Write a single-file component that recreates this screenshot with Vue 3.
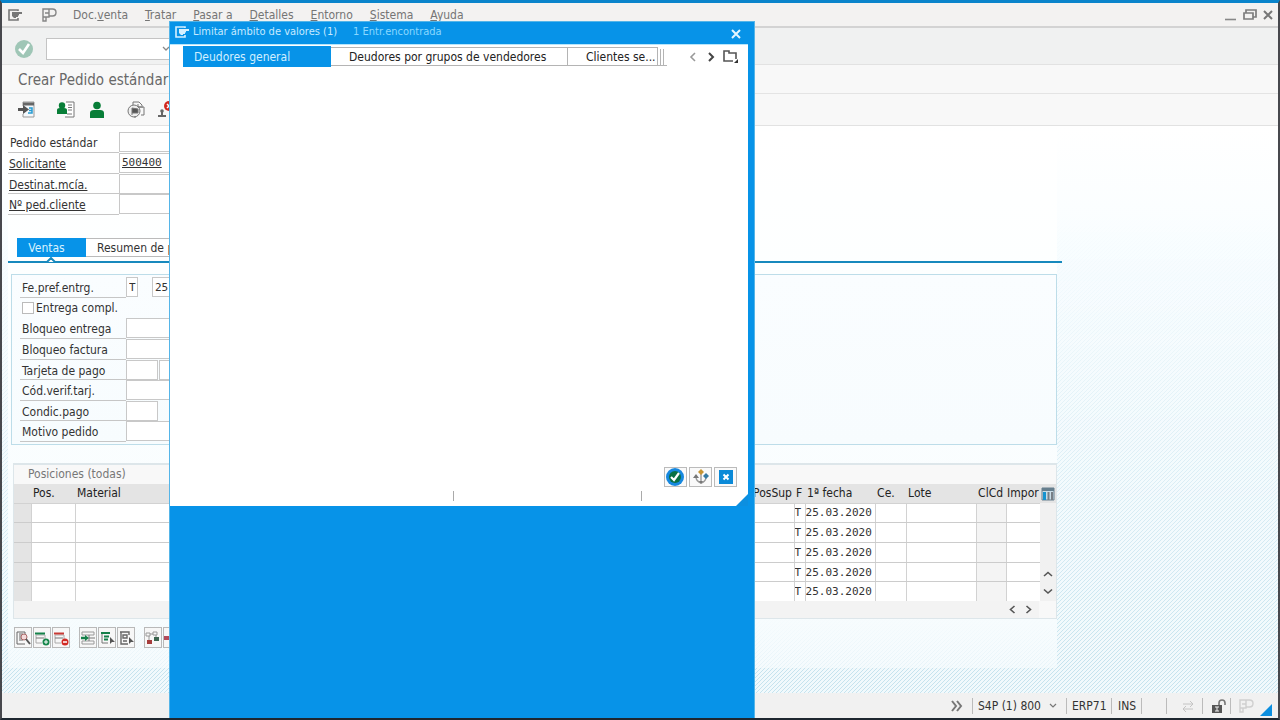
<script setup>
import { ref } from 'vue'

const menus = [
  ['Doc.', 'v', 'enta'],
  ['', 'T', 'ratar'],
  ['', 'P', 'asar a'],
  ['', 'D', 'etalles'],
  ['', 'E', 'ntorno'],
  ['', 'S', 'istema'],
  ['', 'A', 'yuda'],
]
const command = ref('')
const headFields = ref([
  { id: 'pedido', label: 'Pedido estándar', value: '', link: false },
  { id: 'solicitante', label: 'Solicitante', value: '500400', link: true },
  { id: 'destinat', label: 'Destinat.mcía.', value: '', link: true },
  { id: 'cliente', label: 'Nº ped.cliente', value: '', link: true },
])
const full = ref(false)
const typeCode = ref('T')
const prefDate = ref('25.03.2020')
const saleFields = ref([
  { id: 'bloq-ent', label: 'Bloqueo entrega', value: '', size: 'wide' },
  { id: 'bloq-fac', label: 'Bloqueo factura', value: '', size: 'wide' },
  { id: 'tarjeta', label: 'Tarjeta de pago', value: '', size: 'short', extra: true },
  { id: 'verif', label: 'Cód.verif.tarj.', value: '', size: 'wide' },
  { id: 'condic', label: 'Condic.pago', value: '', size: 'short' },
  { id: 'motivo', label: 'Motivo pedido', value: '', size: 'wide' },
])
const rows = Array.from({ length: 5 }, () => ({ type: 'T', date: '25.03.2020' }))
</script>

<template>
  <div class="window">
    <nav class="menubar">
      <button class="plain session" aria-label="Sesión">
        <svg width="14" height="12" viewBox="0 0 14 12"><path d="M10 2V1H1v10h9V9" fill="none" stroke="#777" stroke-width="1.6" /><path d="M4 3h10v2h-3v1.500h-1V8H8v1H6L4 7z" fill="#777" /></svg>
      </button>
      <button class="plain logo" aria-label="Menú">
        <svg width="15" height="14" viewBox="0 0 15 14" fill="none" stroke="#858585" stroke-width="1.4"><path d="M7 8h3.500Q14 8 14 4.500T10.500 1H1v8h6V5H3M7 5V1M1 9v4h3V9" /></svg>
      </button>
      <a v-for="m in menus" :key="m[1]" href="#" class="menu">{{ m[0] }}<u>{{ m[1] }}</u>{{ m[2] }}</a>
      <span class="winctl">
        <button class="plain" aria-label="Minimizar"><svg width="12" height="12"><path d="M0 10.500h11" stroke="#888" stroke-width="1.6" /></svg></button>
        <button class="plain" aria-label="Restaurar"><svg width="14" height="12" fill="none" stroke="#7d7d7d" stroke-width="1.7"><path d="M3 4V1h10v7h-3M1 4h9v6H1z" /></svg></button>
        <button class="plain" aria-label="Cerrar"><svg width="10" height="12"><path d="M1 2l8 8M9 2L1 10" stroke="#777" stroke-width="2" /></svg></button>
      </span>
    </nav>

    <div class="commandbar">
      <button class="plain" aria-label="Continuar">
        <svg width="18" height="20" viewBox="0 0 18 20"><circle cx="9" cy="10" r="9" fill="#9fc6b6" /><path d="M4 10l4 4 6-9" fill="none" stroke="#fff" stroke-width="2.600" /></svg>
      </button>
      <input v-model="command" class="command" aria-label="Comando" />
      <svg class="chev" width="8" height="6"><path d="M1 1l3 3 3-3" fill="none" stroke="#888" stroke-width="1.3" /></svg>
    </div>

    <h1 class="title">Crear Pedido estándar</h1>

    <div class="appbar">
      <button class="plain a1" aria-label="Otro documento"><svg width="18" height="18" viewBox="0 0 18 18"><path d="M5 5V1h11v15H5v-3" fill="#f4f8fb" stroke="#999" /><path d="M5 3h11" stroke="#666" stroke-width="3" /><path d="M0 8.500h6" stroke="#555" stroke-width="3" /><path d="M5 4l6 4.500L5 13z" fill="#555" /><path d="M11 7h3v5h-4M11 9.500h3" fill="none" stroke="#269bd2" stroke-width="1.500" /></svg></button>
      <button class="plain a2" aria-label="Detalles del deudor"><svg width="18" height="18" viewBox="0 0 18 18"><path d="M9 1h8v15H8" fill="#fff" stroke="#777" /><path d="M11 4h4M11 6.500h4M11 9h4M10 13h5" stroke="#777" /><circle cx="5" cy="4.500" r="3.200" fill="#087e38" /><path d="M0 13V9q0-2 3-2h4q3 0 3 2v4z" fill="#087e38" /></svg></button>
      <button class="plain a3" aria-label="Interlocutor"><svg width="14" height="18" viewBox="0 0 14 18"><circle cx="7" cy="4.500" r="3.800" fill="#087e38" /><path d="M0 17v-5q0-3 4-3h6q4 0 4 3v5z" fill="#087e38" /></svg></button>
      <button class="plain a4" aria-label="Resumen de salida"><svg width="18" height="18" viewBox="0 0 18 18" fill="none" stroke="#777"><path d="M6 5V1h6l3 3v3M3 6h14v8h-3" /><circle cx="7" cy="10" r="6" fill="#eee" /><path d="M5 14V7l6 1v4H5" fill="#555" /><path d="M8 15v2M11 3v3h3" /></svg></button>
      <button class="plain a5" aria-label="Rechazar documento"><svg width="18" height="18" viewBox="0 0 18 18"><circle cx="12" cy="5" r="5" fill="#d22b21" /><path d="M10 3l4 4M14 3l-4 4" stroke="#fff" stroke-width="1.500" /><circle cx="5" cy="10" r="1.800" fill="#666" /><path d="M4 11h2v3h3v2H1v-2h3z" fill="#666" /></svg></button>
    </div>

    <main class="work">
      <div class="hatch"></div>
      <div class="sheet">
        <form class="head" @submit.prevent>
          <div v-for="f in headFields" :key="f.id" class="frow">
            <label :for="f.id" :class="{ linked: f.link }">{{ f.label }}</label>
            <input :id="f.id" v-model="f.value" class="wide" :class="{ filled: f.value }" />
          </div>
        </form>

        <div class="tabs">
          <button class="tab active">Ventas</button>
          <button class="tab">Resumen de posiciones</button>
        </div>
        <div class="rule"><svg width="14" height="6" viewBox="0 0 14 6"><path d="M0 5h3l4-4 4 4h3" fill="#fff" stroke="#1789bd" stroke-width="2" /></svg></div>

        <form class="group" @submit.prevent>
          <div class="frow">
            <label for="fpref">Fe.pref.entrg.</label>
            <input id="fpref" v-model="typeCode" class="tiny" />
            <input v-model="prefDate" class="date" aria-label="Fecha preferente" />
          </div>
          <div class="crow"><input id="full" v-model="full" type="checkbox" /><label for="full">Entrega compl.</label></div>
          <div v-for="f in saleFields" :key="f.id" class="frow">
            <label :for="f.id">{{ f.label }}</label>
            <input :id="f.id" v-model="f.value" :class="f.size" />
            <input v-if="f.extra" class="extra" aria-label="Número de tarjeta" />
          </div>
        </form>

        <section class="items">
          <h2>Posiciones (todas)</h2>
          <div class="gridwrap">
            <table>
              <colgroup><col class="c-sel" /><col class="c-pos" /><col /><col class="c-sup" /><col class="c-f" /><col class="c-date" /><col class="c-ce" /><col class="c-lote" /><col class="c-cl" /><col class="c-imp" /></colgroup>
              <thead>
                <tr><th></th><th>Pos.</th><th>Material</th><th>PosSup</th><th>F</th><th>1ª fecha</th><th>Ce.</th><th>Lote</th><th>ClCd</th><th>Impor</th></tr>
              </thead>
              <tbody>
                <tr v-for="(r, i) in rows" :key="i">
                  <td class="sel"></td><td></td><td></td><td></td><td class="mono">{{ r.type }}</td><td class="mono">{{ r.date }}</td><td></td><td></td><td class="off"></td><td></td>
                </tr>
              </tbody>
            </table>
            <div class="vscroll">
              <button class="plain config" aria-label="Configuración"><svg width="14" height="14" viewBox="0 0 14 14"><path d="M1 1h12v12H1z" fill="#c9dce6" stroke="#667f8e" /><path d="M1 2.500h12" stroke="#667f8e" stroke-width="3" /><path d="M3.500 5v8" stroke="#1593cf" stroke-width="3" /><path d="M7.500 5v8M11 5v8" stroke="#777f86" stroke-width="2" /></svg></button>
              <button class="plain" aria-label="Subir"><svg width="10" height="7"><path d="M1 5l4-3.500L9 5" fill="none" stroke="#555" stroke-width="1.600" /></svg></button>
              <button class="plain" aria-label="Bajar"><svg width="10" height="7"><path d="M1 1.500L5 5l4-3.500" fill="none" stroke="#555" stroke-width="1.600" /></svg></button>
            </div>
          </div>
          <div class="hscroll">
            <button class="plain" aria-label="Izquierda"><svg width="7" height="9"><path d="M5.500 1L1.500 4.500 5.500 8" fill="none" stroke="#555" stroke-width="1.600" /></svg></button>
            <button class="plain" aria-label="Derecha"><svg width="7" height="9"><path d="M1.500 1l4 3.500-4 3.500" fill="none" stroke="#555" stroke-width="1.600" /></svg></button>
          </div>
        </section>

        <div class="tools">
          <button aria-label="Detalle"><svg width="16" height="16"><path d="M2 14V2h8v3M2 14h8" fill="none" stroke="#666" /><path d="M4 4h4M4 6h3M4 8h3M4 10h4" stroke="#666" /><circle cx="9" cy="7" r="3" fill="#f4d9d9" stroke="#a66" /><path d="M11 9l4 5" stroke="#555" stroke-width="2" /></svg></button>
          <button aria-label="Insertar"><svg width="16" height="16"><path d="M2 13V5h9v4M2 13h6" fill="none" stroke="#aaa" /><path d="M1 3.500h10" stroke="#15824a" stroke-width="2" /><path d="M2 8h8" stroke="#777" /><circle cx="12" cy="12" r="3.500" fill="#16864b" /><path d="M10 12h4M12 10v4" stroke="#fff" /></svg></button>
          <button class="end" aria-label="Borrar"><svg width="16" height="16"><path d="M2 13V5h9v4M2 13h6" fill="none" stroke="#aaa" /><path d="M1 3.500h10" stroke="#c83a35" stroke-width="2" /><path d="M2 8h8" stroke="#777" /><circle cx="12" cy="12" r="3.500" fill="#d22b25" /><path d="M10 12h4" stroke="#fff" stroke-width="1.500" /></svg></button>
          <button aria-label="Copiar línea"><svg width="16" height="16"><path d="M2 5V2h12v3M2 11v3h12v-3M2 5h12M2 11h12" fill="none" stroke="#999" /><path d="M9 8h6M9 5v6" stroke="#777" /><path d="M5 5v6l4-3z" fill="#16804a" /><path d="M1 8h5" stroke="#16804a" stroke-width="2.500" /></svg></button>
          <button aria-label="Seleccionar todo"><svg width="16" height="16"><path d="M3 2v11h6" fill="none" stroke="#777" /><path d="M2 3h9M5 6.500h5M5 9.500h4" stroke="#16804a" stroke-width="2" /><path d="M11 7v7l2-2h3z" fill="#555" /></svg></button>
          <button class="end" aria-label="Quitar selección"><svg width="16" height="16"><path d="M3 2v12h7M2 2h9v3M5 5h4v3H5zM5 11h4" fill="none" stroke="#666" stroke-width="1.400" /><path d="M11 7v7l2-2h3z" fill="#555" /></svg></button>
          <button aria-label="Jerarquía"><svg width="16" height="16"><path d="M1 3h4v3H1zM8 2h4v3H8zM5 4h3M4 6v5M11 5v3" fill="none" stroke="#999" /><path d="M2 10h5v4H2z" fill="#a63c3c" /><path d="M9 7h5v4H9z" fill="#3d6651" /></svg></button>
          <button aria-label="Configurar"><svg width="16" height="16"><path d="M0 6h5v4H0z" fill="#b34a59" /></svg></button>
        </div>
      </div>
    </main>

    <footer class="status">
      <button class="plain more" aria-label="Más"><svg width="12" height="12"><path d="M1 1l4 5-4 5M6 1l4 5-4 5" fill="none" stroke="#777" stroke-width="2" /></svg></button>
      <span class="cell sys">S4P (1) 800 <svg width="8" height="6"><path d="M1 1l3 3 3-3" fill="none" stroke="#777" stroke-width="1.200" /></svg></span>
      <span class="cell erp">ERP71</span>
      <span class="cell ins">INS</span>
      <span class="cell gap"></span>
      <span class="cell arrows"><svg width="12" height="12" fill="none" stroke="#c4c4c4"><path d="M1 4h9M8 1l3 3-3 3M11 9H2M4 6L1 9l3 3" /></svg></span>
      <span class="cell lock"><svg width="15" height="14"><path d="M8 6V4q0-3 3-3t3 3v2" fill="none" stroke="#777" stroke-width="1.600" /><path d="M1 6h10v8H1z" fill="#555" /><path d="M4 8h4M6 8v4M4 12h4" stroke="#eee" /></svg></span>
      <span class="cell last"><svg width="15" height="14" viewBox="0 0 15 14" fill="none" stroke="#cfcfcf" stroke-width="1.400"><path d="M7 8h3.500Q14 8 14 4.500T10.500 1H1v8h6V5H3M7 5V1M1 9v4h3V9" /></svg></span>
      <svg class="grip" width="12" height="12"><path d="M12 0v12H0z" fill="#0c8fe0" /></svg>
    </footer>

    <div class="dialog" role="dialog" aria-labelledby="dlg-title">
      <header>
        <svg width="14" height="12" viewBox="0 0 14 12"><path d="M10 2V1H1v10h9V9" fill="none" stroke="#d5f0ff" stroke-width="1.600" /><path d="M4 3h10v2h-3v1.500h-1V8H8v1H6L4 7z" fill="#d5f0ff" /></svg>
        <span id="dlg-title">Limitar ámbito de valores (1)</span>
        <span class="count">1 Entr.encontrada</span>
        <button class="plain" aria-label="Cerrar diálogo"><svg width="10" height="10"><path d="M1 1l8 8M9 1L1 9" stroke="#e4f6ff" stroke-width="2" /></svg></button>
      </header>
      <div class="pane">
        <div class="dtabs">
          <button class="dtab active">Deudores general</button>
          <button class="dtab mid">Deudores por grupos de vendedores</button>
          <button class="dtab cut">Clientes se...</button>
          <span class="stack"><i></i><i></i></span>
          <span class="dnav">
            <button class="plain" aria-label="Anterior"><svg width="7" height="10"><path d="M6 1L2 5l4 4" fill="none" stroke="#999" stroke-width="1.600" /></svg></button>
            <button class="plain" aria-label="Siguiente"><svg width="7" height="10"><path d="M1 1l4 4-4 4" fill="none" stroke="#444" stroke-width="2" /></svg></button>
            <button class="plain" aria-label="Lista de fichas"><svg width="15" height="13"><path d="M10 11H1V1h5v2h7v6" fill="none" stroke="#555" stroke-width="1.600" /><path d="M15 9v4h-4z" fill="#333" /></svg></button>
          </span>
        </div>
        <div class="actions">
          <button class="ok" aria-label="Aceptar"><svg width="20" height="20"><circle cx="10" cy="10" r="9" fill="#1688df" /><circle cx="10" cy="10" r="6" fill="#087044" /><path d="M6 10l3 3 5-7" fill="none" stroke="#fff" stroke-width="2.200" /></svg></button>
          <button aria-label="Selección múltiple"><svg width="16" height="16"><path d="M8 4v10M3 8q0 4 5 6 4-1 5-5" fill="none" stroke="#999" stroke-width="1.400" /><path d="M8 0l3 3-3 3-3-3z" fill="#c69433" /><path d="M13 4l3 3-3 3-3-3z" fill="#347ba4" /><path d="M3 5l3 4H0zM6 12h4l-2 3z" fill="#777" /></svg></button>
          <button aria-label="Cancelar"><svg width="14" height="14"><path d="M0 0h14v14H0z" fill="#0b8ad8" /><path d="M4.500 4.500l5 5M9.500 4.500l-5 5" stroke="#fff" stroke-width="2" /></svg></button>
        </div>
        <div class="ticks"><i></i><i></i></div>
        <svg class="corner" width="12" height="12"><path d="M12 0v12H0z" fill="#0c8fe0" /></svg>
      </div>
    </div>
  </div>
</template>

<style>
body { margin: 0; }
</style>

<style scoped>
* { box-sizing: border-box; }
.window {
  position: relative; display: flex; flex-direction: column; min-height: 100vh; overflow: hidden;
  border: 2px solid #47484d; border-top: 3px solid #0984cb; border-bottom-color: #1e2730;
  background: #f0f0f0; color: #333;
  font-family: "DejaVu Sans Condensed", "Noto Sans", sans-serif; font-size: 12px; line-height: 16px;
}
button, input { font: inherit; color: inherit; margin: 0; padding: 0; border-radius: 0; }
button { white-space: nowrap; }
.plain { border: 0; background: none; display: flex; align-items: center; justify-content: center; }
svg { display: block; flex: none; }

.menubar { display: flex; align-items: center; height: 25px; padding: 0 5px 0 6px; border-bottom: 2px solid #d3d3d3; background: #f3f2f1; color: #757575; }
.session { margin-right: 20px; }
.logo { margin-right: 16px; }
.menu { color: inherit; text-decoration: none; margin-right: 17px; }
.winctl { display: flex; gap: 6px; margin-left: auto; }
.commandbar { display: flex; align-items: center; height: 37px; padding-left: 13px; border-bottom: 1px solid #e2e2e2; background: #f0f1f1; }
.commandbar .plain { margin-right: 13px; }
.command { width: 160px; height: 22px; border: 1px solid #c4c4c4; background: #fff; padding: 0 20px 0 4px; }
.commandbar { padding-bottom: 0; padding-top: 5px; }
.chev { margin-left: -44px; }
.title { margin: 0; height: 29px; padding-left: 16px; border-bottom: 1px solid #e4e4e4; background: #f8f8f8; color: #686868; font-size: 15px; line-height: 30px; font-weight: 400; }
.appbar { display: flex; align-items: center; height: 32px; padding-left: 16px; border-bottom: 1px solid #e2e2e2; background: #f8f8f8; }
.a1 { margin-right: 21px; }
.a2 { margin-right: 15px; }
.a3 { margin-right: 23px; }
.a4 { margin-right: 12px; }

.work { position: relative; flex: 1; padding: 6px 0 24px 6px; background: linear-gradient(#fff, #f8fdff 25%, #f2fafd); }
.hatch {
  position: absolute; inset: 0;
  background: linear-gradient(135deg, #c6e3ee 12.5%, #f1f9fc 12.5% 50%, #c6e3ee 50% 62.5%, #f1f9fc 62.5%) 0 0 / 4px 4px;
  mask-image: linear-gradient(transparent 15%, #0003 35%, #0008 60%, #000 95%);
}
.sheet { position: relative; width: 83%; background: linear-gradient(#fff, #fdffff 25%, #f7fcfe 90%, #f7fcfeaa) 0 0 / calc(100% - 5px) 100% no-repeat; }
.head { display: grid; grid-template-rows: repeat(4, 1fr); height: 83px; width: 340px; }
.frow { display: flex; min-height: 0; align-items: stretch; }
.frow label { width: 111px; border-bottom: 1px solid #c6c6c6; padding: 3px 0 0 2px; }
.frow label.linked { text-decoration: underline; padding-left: 1px; }
.frow input { height: 20px; min-width: 0; background: #fff; border: 1px solid #c8c8c8; padding: 0 2px; font-family: "DejaVu Sans Mono", monospace; font-size: 11px; }
.wide { width: 220px; }
.frow .filled { text-decoration: underline; }
.tabs { display: flex; margin: 23px 0 0 9px; height: 19px; }
.tab { border: 1px solid #bbb; border-left: 0; background: #fff; padding: 0 11px; }
.tab.active { width: 69px; background: #0793e8; border-color: #0793e8; color: #d8f2ff; padding-right: 20px; }
.rule { height: 2px; margin-top: 4px; background: #1789bd; }
.rule svg { position: relative; top: -4px; left: 36px; }
.group { display: grid; grid-template-rows: repeat(8, 1fr); height: 171px; margin: 11px 5px 0 3px; padding: 2px 0 2px 8px; border: 1px solid #bddde9; background: linear-gradient(#fafdff, #f7fcfe); }
.group .frow label { width: 106px; }
.frow .tiny { width: 12px; padding: 0 0 0 2px; margin-right: 14px; }
.group .date { width: 90px; }
.short { width: 32px; margin-right: 1px; }
.extra { width: 120px; }
.crow { display: flex; align-items: center; }
.crow input { appearance: none; width: 12px; height: 12px; margin: 0 2px 0 2px; border: 1px solid #bbb; background: #fff; }

.items { margin: 18px 5px 0; border: 1px solid #dde6ea; border-top-width: 2px; background: #f8f8f8; }
.items h2 { margin: 0; padding: 1px 0 2px 14px; font-size: 12px; line-height: 16px; font-weight: 400; color: #777; }
.gridwrap { display: flex; }
table { flex: 1; width: 100%; height: 117px; table-layout: fixed; border-collapse: collapse; }
th, td { padding: 0; overflow: hidden; white-space: nowrap; }
th { height: 19px; background: #e4e4e4; font-weight: 400; text-align: left; padding-left: 2px; color: #222; }
th:last-child { overflow: visible; padding-left: 1px; }
td { background: #fff; border: 1px solid #d2d2d2; border-bottom-color: #ccc; }
td:first-child { border-left: 0; }
td:last-child { border-right: 0; }
tbody tr:last-child td { border-bottom: 0; }
td.sel { background: #e4e4e4; }
td.off { background: #f4f4f4; }
.mono { font-family: "DejaVu Sans Mono", monospace; font-size: 11px; line-height: 15px; }
.c-sel { width: 17px; } .c-pos { width: 44px; } .c-sup { width: 43px; } .c-f { width: 11px; } .c-date { width: 70px; }
.c-ce { width: 31px; } .c-lote { width: 70px; } .c-cl { width: 30px; } .c-imp { width: 34px; }
.vscroll { display: flex; flex-direction: column; gap: 10px; width: 16px; align-items: center; background: #f1f1f1; padding-bottom: 6px; }
.config { width: 16px; height: 19px; background: #e4e4e4; margin-bottom: auto; }
.hscroll { display: flex; justify-content: flex-end; gap: 9px; height: 17px; margin-right: 17px; padding-right: 7px; background: #f3f3f3; }
.tools { display: flex; gap: 1px; padding: 8px 0 20px 6px; width: 340px; }
.tools button { width: 18px; height: 21px; border: 1px solid #b9b9b9; background: #f7f7f7; display: flex; align-items: center; justify-content: center; overflow: hidden; }
.tools .end { margin-right: 8px; }

.status { display: flex; align-items: center; justify-content: flex-end; height: 25px; padding-top: 1px; background: #f1f1f1; }
.more { margin-right: 9px; }
.cell { display: flex; align-items: center; height: 16px; border-left: 1px solid #bbb; padding-left: 6px; }
.cell svg { margin-left: auto; margin-right: auto; }
.sys { width: 94px; padding-left: 5px; }
.erp { width: 45px; padding-left: 5px; }
.ins { width: 30px; }
.gap { width: 25px; }
.arrows { width: 36px; }
.lock { width: 28px; padding-left: 3px; }
.last { width: 28px; padding-left: 3px; }
.grip { margin: 8px 6px 0 2px; }

.dialog { position: absolute; left: 167px; top: 18px; bottom: 0; width: 586px; background: #0793e8; border: 1px solid #55b5e8; border-bottom: 0; }
.dialog header { display: flex; align-items: center; height: 22px; padding: 0 13px 2px 5px; color: #c6eaff; font-size: 11px; }
.dialog header svg { margin-right: 4px; }
.dialog header .plain { margin-left: auto; }
.dialog header .plain svg { margin: 3px 0 0; }
.count { margin-left: 16px; color: #8ad8ff; }
.pane { position: relative; height: 462px; margin-right: 6px; background: #fff; border-top: 1px solid #b5e5fb; display: flex; flex-direction: column; }
.dtabs { display: flex; margin: 1px 0 0 13px; height: 21px; }
.dtab { border: 1px solid #b4b4b4; border-left: 0; background: #fff; width: 90px; text-align: left; padding-left: 18px; margin: 1px 0; color: #222; }
.dtab.active { width: 148px; margin: 0; background: #0793e8; border-color: #0793e8; color: #d2efff; padding-left: 11px; }
.dtab.mid { width: 237px; }
.stack { display: flex; margin: 3px 0 1px; border-bottom: 1px solid #b4b4b4; width: 9px; }
.stack i { width: 3px; border-right: 1px solid #b4b4b4; }
.dnav { display: flex; align-items: center; gap: 12px; margin-left: auto; padding-right: 10px; }
.dnav .plain + .plain + .plain { margin-left: -4px; }
.actions { display: flex; justify-content: flex-end; gap: 2px; margin-top: auto; padding-right: 11px; }
.actions button { display: flex; align-items: center; justify-content: center; width: 23px; height: 20px; border: 1px solid #bbb; background: #fafafa; }
.actions .ok { justify-content: flex-start; }
.ticks { display: flex; justify-content: flex-end; gap: 187px; padding: 4px 106px 5px 0; }
.ticks i { width: 1px; height: 10px; background: #aaa; }
.corner { position: absolute; right: 0; bottom: 0; }
</style>
